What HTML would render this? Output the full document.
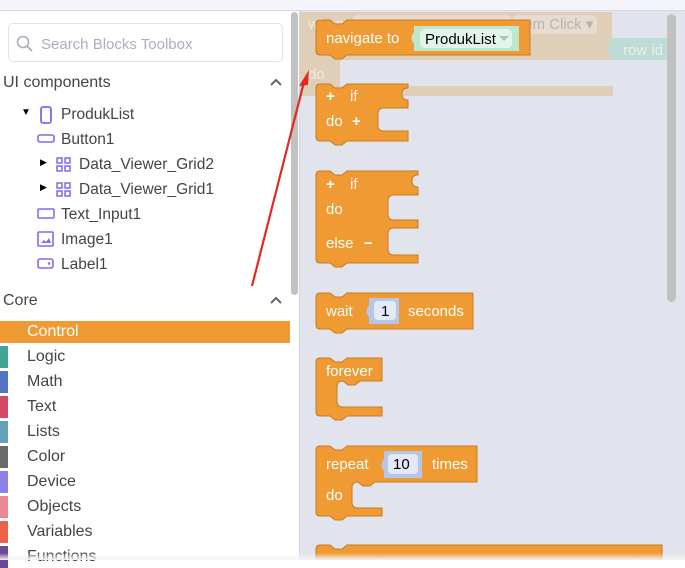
<!DOCTYPE html>
<html><head><style>
body{margin:0;width:685px;height:560px;overflow:hidden;background:#fff;font-family:"Liberation Sans",sans-serif;position:relative}
.abs{position:absolute}
.t{position:absolute;font-size:15.5px;color:#444;white-space:nowrap}
.bar{position:absolute;left:0;width:8px;height:22px}
</style></head><body>
<div class="abs" style="left:0;top:0;width:685px;height:10px;background:#f4f5fa;border-bottom:1px solid #d5dae6"></div>
<div class="abs" style="left:8px;top:23px;width:273px;height:37px;border:1px solid #e2e4ea;border-radius:5px"></div>
<svg class="abs" style="left:15px;top:34px" width="20" height="20"><circle cx="8" cy="8" r="5.5" fill="none" stroke="#a8adbb" stroke-width="1.6"/><line x1="12" y1="12" x2="17" y2="17" stroke="#a8adbb" stroke-width="1.8"/></svg>
<div class="t" style="left:41px;top:36px;font-size:15px;color:#a9aec0">Search Blocks Toolbox</div>
<div class="t" style="left:3px;top:74px;font-size:16px">UI components</div>
<svg class="abs" style="left:269px;top:77px" width="14" height="10"><path d="M2 8 L7 3 L12 8" fill="none" stroke="#666" stroke-width="2"/></svg>
<div class="t" style="left:21px;top:107px;font-size:10px;color:#000">&#9660;</div>
<svg class="abs" style="left:40px;top:106px" width="12" height="18"><rect x="1" y="1" width="10" height="16" rx="2" fill="none" stroke="#7b6cf0" stroke-width="1.8"/></svg>
<div class="t" style="left:61px;top:106px">ProdukList</div>
<svg class="abs" style="left:37px;top:134px" width="18" height="10"><rect x="1" y="1" width="16" height="7" rx="2" fill="none" stroke="#7b6cf0" stroke-width="1.6"/></svg>
<div class="t" style="left:61px;top:131px">Button1</div>
<div class="t" style="left:40px;top:157px;font-size:9px;color:#000">&#9654;</div>
<div class="t" style="left:40px;top:182px;font-size:9px;color:#000">&#9654;</div>
<svg class="abs" style="left:56px;top:157px" width="16" height="16"><g fill="none" stroke="#7b6cf0" stroke-width="1.5"><rect x="1" y="1" width="5" height="5"/><rect x="9" y="1" width="5" height="5"/><rect x="1" y="9" width="5" height="5"/><rect x="9" y="9" width="5" height="5"/></g></svg>
<svg class="abs" style="left:56px;top:182px" width="16" height="16"><g fill="none" stroke="#7b6cf0" stroke-width="1.5"><rect x="1" y="1" width="5" height="5"/><rect x="9" y="1" width="5" height="5"/><rect x="1" y="9" width="5" height="5"/><rect x="9" y="9" width="5" height="5"/></g></svg>
<div class="t" style="left:79px;top:156px">Data_Viewer_Grid2</div>
<div class="t" style="left:79px;top:181px">Data_Viewer_Grid1</div>
<svg class="abs" style="left:37px;top:208px" width="18" height="12"><rect x="1" y="1" width="16" height="9" rx="1" fill="none" stroke="#7b6cf0" stroke-width="1.5"/></svg>
<div class="t" style="left:61px;top:206px">Text_Input1</div>
<svg class="abs" style="left:37px;top:231px" width="18" height="16"><rect x="1" y="1" width="15" height="14" rx="1" fill="none" stroke="#7b6cf0" stroke-width="1.6"/><path d="M4 12 L7 9 L9 11 L12 7 L14 12Z" fill="#7b6cf0"/></svg>
<div class="t" style="left:61px;top:231px">Image1</div>
<svg class="abs" style="left:37px;top:258px" width="18" height="12"><rect x="1" y="1" width="15" height="9" rx="2" fill="none" stroke="#7b6cf0" stroke-width="1.6"/><circle cx="12" cy="5.5" r="1.3" fill="#7b6cf0"/></svg>
<div class="t" style="left:61px;top:256px">Label1</div>
<div class="t" style="left:3px;top:292px;font-size:16px">Core</div>
<svg class="abs" style="left:269px;top:295px" width="14" height="10"><path d="M2 8 L7 3 L12 8" fill="none" stroke="#666" stroke-width="2"/></svg>
<div class="abs" style="left:0;top:321px;width:290px;height:22px;background:#ef9a34"></div>
<div class="t" style="left:27px;top:323px;color:#fff;font-size:16px">Control</div>
<div class="bar" style="top:346px;background:#44a595"></div><div class="t" style="left:27px;top:348px;font-size:16px">Logic</div>
<div class="bar" style="top:371px;background:#5573c4"></div><div class="t" style="left:27px;top:373px;font-size:16px">Math</div>
<div class="bar" style="top:396px;background:#d54868"></div><div class="t" style="left:27px;top:398px;font-size:16px">Text</div>
<div class="bar" style="top:421px;background:#61a1ba"></div><div class="t" style="left:27px;top:423px;font-size:16px">Lists</div>
<div class="bar" style="top:446px;background:#6b6b6b"></div><div class="t" style="left:27px;top:448px;font-size:16px">Color</div>
<div class="bar" style="top:471px;background:#8a80e5"></div><div class="t" style="left:27px;top:473px;font-size:16px">Device</div>
<div class="bar" style="top:496px;background:#ed8796"></div><div class="t" style="left:27px;top:498px;font-size:16px">Objects</div>
<div class="bar" style="top:521px;background:#ec6248"></div><div class="t" style="left:27px;top:523px;font-size:16px">Variables</div>
<div class="bar" style="top:546px;background:#6a489a"></div><div class="t" style="left:27px;top:548px;font-size:16px">Functions</div>
<div class="abs" style="left:291px;top:12px;width:7px;height:283px;background:#c1c1c1;border-radius:4px"></div>
<div class="abs" style="left:299px;top:11px;width:386px;height:549px;background:#e1e4ec;border-left:1px solid #cfd4e0"></div>
<svg class="abs" style="left:0;top:0" width="685" height="560" font-family="Liberation Sans,sans-serif" font-size="15">
<path d="M300 12 H612 V60 H340 V86 H613 V96 H300Z" fill="#e0cfb8"/>
<text x="308" y="29" fill="#f1e9de">when</text>
<rect x="352" y="15" width="160" height="19" rx="5" fill="#e6dccf"/><rect x="512" y="15" width="85" height="19" rx="5" fill="#e6dccf"/>
<text x="520" y="29" fill="#b8b4ae" font-size="15">tem Click ▾</text>
<text x="308" y="79" fill="#f1e9de">do</text>
<path d="M610 38 H667 V60 H610 V54 Q605 49 610 44Z" fill="#bedcd5"/>
<text x="623" y="55" fill="#e4f1ee">row id</text>
<rect x="667" y="14" width="9" height="288" rx="4.5" fill="#c1c1c1"/>
<g fill="#ef9a32" stroke="#c97a22" stroke-width="1">
<path d="M316 24 Q316 20 320 20 H330 L335 24 H342 L347 20 H530 V55 H347 L342 59 H335 L330 55 H320 Q316 55 316 51Z"/>
<path d="M320 84 H330 L335 88 H342 L347 84 H408 V88 Q402 88 402 94 Q402 100 408 100 V108 H384 Q378 108 378 114 V126 Q378 131 384 131 H408 V141 H347 L342 145 H335 L330 141 H320 Q316 141 316 137 V88 Q316 84 320 84Z"/>
<path d="M320 171 H330 L335 175 H342 L347 171 H418 V175 Q412 175 412 181 Q412 187 418 187 V195 H394 Q388 195 388 201 V214 Q388 220 394 220 H418 V228 H394 Q388 228 388 234 V249 Q388 255 394 255 H418 V263 H347 L342 267 H335 L330 263 H320 Q316 263 316 259 V175 Q316 171 320 171Z"/>
<path d="M320 293 H330 L335 297 H342 L347 293 H473 V329 H347 L342 333 H335 L330 329 H320 Q316 329 316 325 V297 Q316 293 320 293Z"/>
<path d="M320 358 H330 L335 362 H342 L347 358 H382 V381 H360 L355 385 H348 L343 381 Q337 381 337 387 V401 Q337 407 343 407 H382 V416 H347 L342 420 H335 L330 416 H320 Q316 416 316 412 V362 Q316 358 320 358Z"/>
<path d="M320 446 H330 L335 450 H342 L347 446 H477 V482 H375 L370 486 H363 L358 482 Q352 482 352 488 V502 Q352 508 358 508 H382 V516 H347 L342 520 H335 L330 516 H320 Q316 516 316 512 V450 Q316 446 320 446Z"/>
<path d="M320 545 H330 L335 549 H342 L347 545 H662 V560 H316 V549 Q316 545 320 545Z"/>
</g>
<path d="M414 26 H519 V51 H414 V44 Q409 38 414 32Z" fill="#bde6cc"/>
<rect x="420" y="29" width="92" height="19" rx="5" fill="#e3f5ea"/>
<text x="425" y="44" fill="#000" font-size="15">ProdukList</text>
<path d="M499 36 H509 L504 41Z" fill="#9fcdb1"/>
<path d="M369 298 H399 V324 H369 V317 Q364 311 369 305Z" fill="#b6c6e8"/>
<rect x="374" y="301" width="22" height="19" rx="4" fill="#e3e9f6"/>
<text x="381" y="316" fill="#000">1</text>
<path d="M384 451 H422 V478 H384 V471 Q379 465 384 459Z" fill="#b6c6e8"/>
<rect x="388" y="454" width="30" height="20" rx="4" fill="#e3e9f6"/>
<text x="393" y="469" fill="#000">10</text>
<g fill="#fff" font-size="15">
<text x="326" y="43">navigate to</text>
<text x="326" y="101" font-weight="bold">+</text><text x="350" y="101">if</text>
<text x="326" y="126">do</text><text x="352" y="126" font-weight="bold">+</text>
<text x="326" y="189" font-weight="bold">+</text><text x="350" y="189">if</text>
<text x="326" y="214">do</text><text x="326" y="248">else</text><text x="364" y="248" font-weight="bold">−</text>
<text x="326" y="316">wait</text><text x="408" y="316">seconds</text>
<text x="326" y="376">forever</text>
<text x="326" y="469">repeat</text><text x="432" y="469">times</text><text x="326" y="500">do</text>
</g>
<path d="M252 286 L305 78" stroke="#e02a22" stroke-width="2.2"/>
<path d="M309 70 L299 86 L308 85Z" fill="#e02a22"/>
</svg>
<div class="abs" style="left:0;top:553px;width:685px;height:7px;background:linear-gradient(#fff0,#f2f3f5)"></div>
</body></html>
